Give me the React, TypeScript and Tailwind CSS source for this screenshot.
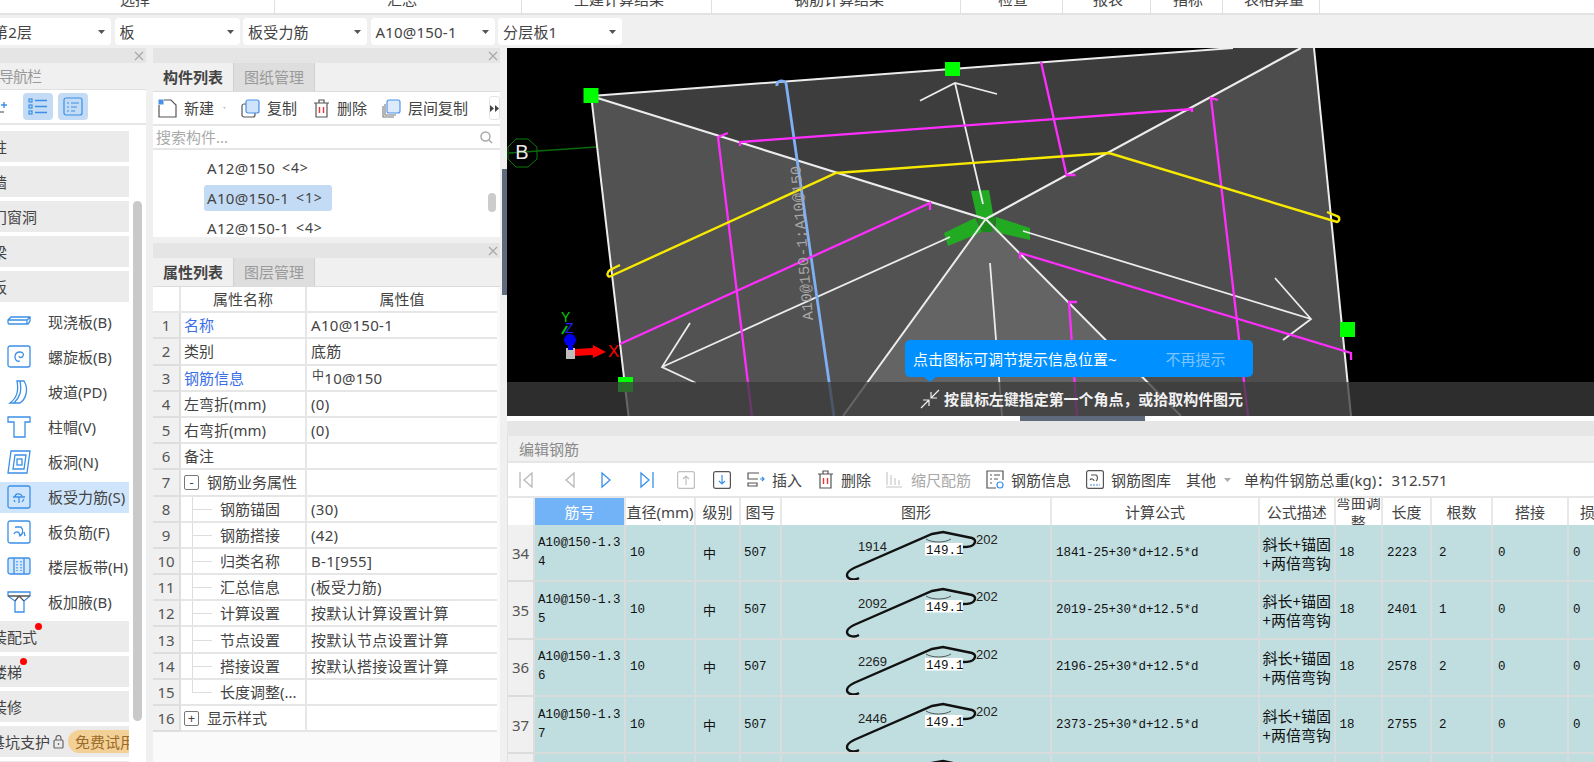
import React from "react";

const MONO = "font-['Liberation_Mono',monospace]";

const topTabs = [
  { label: "选择", cls: "w-[275px] pl-[120px]" },
  { label: "汇总", cls: "w-[247px] pl-[112px]" },
  { label: "土建计算结果", cls: "w-[190px] pl-[52px]" },
  { label: "钢筋计算结果", cls: "w-[249px] pl-[82px]" },
  { label: "检查", cls: "w-[102px] pl-[37px]" },
  { label: "报表", cls: "w-[88px] pl-[30px]" },
  { label: "指标", cls: "w-[72px] pl-[22px]" },
  { label: "表格算量", cls: "w-[97px] pl-[21px]" },
];

function Caret({ className = "" }: { className?: string }) {
  return (
    <svg width="7" height="4" viewBox="0 0 7 4" className={className}>
      <path d="M0 0h7L3.500 4z" fill="currentColor" />
    </svg>
  );
}

function Select({ text, cls, textCls = "" }: { text: string; cls: string; textCls?: string }) {
  return (
    <div className={`flex h-[27px] shrink-0 items-center justify-between rounded-[4px] bg-white pl-[5px] pr-[6px] ${cls}`}>
      <span className={`whitespace-nowrap tracking-[0.2px] ${textCls}`}>{text}</span>
      <Caret className="text-[#555]" />
    </div>
  );
}

function CloseStrip() {
  return (
    <div className="flex h-[15px] items-center justify-end bg-[#e5e5e5] pr-[2px]">
      <svg width="10" height="10" viewBox="0 0 10 10" stroke="#a8a8a8" strokeWidth="1.2">
        <path d="M1 1l8 8M9 1l-8 8" />
      </svg>
    </div>
  );
}

function Tabs({ active, other }: { active: string; other: string }) {
  return (
    <div className="flex h-[29px] border-b border-[#dcdcdc] bg-[#f0f0f0]">
      <div className="flex w-[81px] items-center justify-center border-r border-[#d0d0d0] font-bold text-[#444]">{active}</div>
      <div className="flex w-[81px] items-center justify-center border-r border-[#d0d0d0] bg-[#dedede] text-[#9a9a9a]">{other}</div>
    </div>
  );
}

const BL = "#3b8fe8";

function NavIcon({ kind }: { kind: string }) {
  const c = { fill: "none", stroke: BL, strokeWidth: 1.3 };
  return (
    <svg width="24" height="24" viewBox="0 0 24 24" {...c}>
      {kind === "slab" && <path d="M1 10l3-3h19v4l-2 3H2l-1-1zM1 10h19l3-3M20 10v4" />}
      {kind === "spiral" && (
        <>
          <rect x="1" y="1" width="22" height="21" rx="2" />
          <path d="M13 16c-3 1-5-1-5-4s2-5 5-5 4 2 3 4-4 2-4 0" />
        </>
      )}
      {kind === "ramp" && <path d="M3 23c7-5 9-12 7-22h7c5 8 2 18-4 22zM7 23c6-6 8-12 6-22" />}
      {kind === "cap" && <path d="M1 2h22v5H18v15H7V7H1zM1 7h6M18 7h5" />}
      {kind === "hole" && (
        <>
          <path d="M4 1h19l-3 22H1z" />
          <path d="M8 5h11l-2 14H6z" />
          <rect x="10" y="9" width="5" height="6" />
        </>
      )}
      {kind === "bar" && (
        <>
          <rect x="1" y="1" width="22" height="22" rx="2" />
          <path d="M6 12h12M8 12c0-4 6-4 7-1M12 12v6M17 14l-2 3M7 15l1 2" />
        </>
      )}
      {kind === "neg" && (
        <>
          <rect x="1" y="1" width="22" height="22" rx="2" />
          <path d="M8 7h6c3 3 2 8-2 9M7 14c1-3 5-3 6 1M17 12l1 4" />
        </>
      )}
      {kind === "band" && (
        <>
          <rect x="1" y="3" width="22" height="16" rx="2" fill="#d6e8fb" />
          <path d="M7 3v16M17 3v16" />
          <path d="M10 6v10M14 6v10" strokeDasharray="1.500 1.500" />
        </>
      )}
      {kind === "haunch" && (
        <>
          <path d="M1 2h22v4l-6 5v11H8V11L1 6z" />
          <path d="M1 6h22M8 11l4-5 5 5" stroke="#555" />
        </>
      )}
    </svg>
  );
}

const subItems = [
  { icon: "slab", label: "现浇板(B)" },
  { icon: "spiral", label: "螺旋板(B)" },
  { icon: "ramp", label: "坡道(PD)" },
  { icon: "cap", label: "柱帽(V)" },
  { icon: "hole", label: "板洞(N)" },
  { icon: "bar", label: "板受力筋(S)", selected: true },
  { icon: "neg", label: "板负筋(F)" },
  { icon: "band", label: "楼层板带(H)" },
  { icon: "haunch", label: "板加腋(B)" },
];

function NavGroup({ label, dot }: { label: string; dot?: string }) {
  return (
    <div className="relative flex h-[31px] shrink-0 items-center overflow-hidden bg-[#ebebeb]">
      <span className="ml-[-8px] whitespace-nowrap text-[#444]">{label}</span>
      {dot && <span className={`absolute top-[2px] h-[7px] w-[7px] rounded-full bg-[#f00] ${dot}`} />}
    </div>
  );
}

function Nav() {
  return (
    <div className="flex h-full w-[146px] shrink-0 flex-col bg-white">
      <CloseStrip />
      <div className="flex h-[27px] items-center border-b border-[#e0e0e0] bg-[#f0f0f0] text-[#999]">
        <span className="ml-[-1px] tracking-[-1px]">导航栏</span>
      </div>
      <div className="flex h-[35px] items-center border-b-2 border-[#e6e6e6]">
        <svg width="9" height="12" viewBox="0 0 9 12" stroke={BL} strokeWidth="1.400">
          <path d="M4 1v6M1 4h6" />
          <path d="M0 11h4" stroke="#777" />
        </svg>
        <div className="ml-[14px] flex h-[27px] w-[30px] items-center justify-center rounded-[4px] bg-[#c3dbf5]">
          <svg width="20" height="17" viewBox="0 0 20 17" fill="none" stroke={BL} strokeWidth="1.200">
            <rect x="1" y="1" width="3" height="3" />
            <rect x="1" y="7" width="3" height="3" />
            <rect x="1" y="13" width="3" height="3" />
            <path d="M7 2.500h12M7 8.500h12M7 14.500h12" strokeWidth="1.500" />
          </svg>
        </div>
        <div className="ml-[5px] flex h-[27px] w-[30px] items-center justify-center rounded-[4px] bg-[#c3dbf5]">
          <svg width="20" height="19" viewBox="0 0 20 19" fill="none" stroke={BL} strokeWidth="1.200">
            <rect x="1" y="1" width="18" height="17" rx="2" />
            <path d="M4 6h2M8 6h8M4 10h2M8 10h6M4 14h2M8 14h4" />
          </svg>
        </div>
      </div>
      <div className="flex min-h-0 flex-1 gap-[4px] overflow-hidden">
        <div className="flex w-[129px] shrink-0 flex-col gap-[4px] pt-[6px]">
          <NavGroup label="柱" />
          <NavGroup label="墙" />
          <NavGroup label="门窗洞" />
          <NavGroup label="梁" />
          <NavGroup label="板" />
          <div className="mb-[-2.5px] mt-[-1.5px] flex shrink-0 flex-col">
            {subItems.map((s) => (
              <div key={s.label} className="flex h-[35px] items-center">
                <div className={`flex h-[31px] w-full items-center pl-[7px] ${s.selected ? "bg-[#cfe5fb]" : ""}`}>
                  <NavIcon kind={s.icon} />
                  <span className="ml-[17px] whitespace-nowrap text-[#444]">{s.label}</span>
                </div>
              </div>
            ))}
          </div>
          <NavGroup label="装配式" dot="left-[35px]" />
          <NavGroup label="楼梯" dot="left-[20px]" />
          <NavGroup label="装修" />
          <div className="flex h-[31px] shrink-0 items-center overflow-hidden bg-[#ebebeb]">
            <span className="ml-[-10px] whitespace-nowrap text-[#444]">基坑支护</span>
            <svg width="11" height="14" viewBox="0 0 11 14" fill="none" stroke="#666" strokeWidth="1.200" className="ml-[3px] shrink-0">
              <rect x="1" y="5" width="9" height="8" rx="1" />
              <path d="M3 5V3a2.500 2.500 0 0 1 5 0v2M5.500 8v2" />
            </svg>
            <span className="ml-[4px] flex h-[23px] shrink-0 items-center whitespace-nowrap rounded-l-full bg-[#f3d196] pl-[7px] pr-[10px] text-[#9a6a2a]">免费试用</span>
          </div>
          <NavGroup label="" />
        </div>
        <div className="mt-[76px] h-[520px] w-[9px] shrink-0 rounded-full bg-[#c9c9c9]" />
      </div>
    </div>
  );
}

function ToolBtn({ icon, label, cls }: { icon: React.ReactNode; label: string; cls: string }) {
  return (
    <div className={`flex shrink-0 items-center ${cls}`}>
      {icon}
      <span className="whitespace-nowrap text-[#444]">{label}</span>
    </div>
  );
}

function ListRow({ name, count, cls }: { name: string; count: number; cls: string }) {
  return (
    <div className={`flex h-[26px] items-center pl-[3px] tracking-[0.3px] ${cls}`}>
      {name}
      <span className="ml-[7px] text-[14px] tracking-[0.8px]">&lt;{count}&gt;</span>
    </div>
  );
}

function ComponentPanel() {
  return (
    <div className="flex h-[189px] shrink-0 flex-col bg-white">
      <CloseStrip />
      <Tabs active="构件列表" other="图纸管理" />
      <div className="flex h-[34px] items-center border-b-2 border-[#e6e6e6] pl-[5px]">
        <ToolBtn
          cls="gap-[7px]"
          label="新建"
          icon={
            <svg width="19" height="19" viewBox="0 0 19 19" fill="none" stroke="#555" strokeWidth="1.200">
              <path d="M1 6v12h17V6l-5-5H6" />
              <rect x="0.500" y="0.500" width="5" height="5" fill="#4a8fe8" stroke="none" />
            </svg>
          }
        />
        <Caret className="ml-[9px] text-[#aaa]" />
        <ToolBtn
          cls="ml-[15px] gap-[7px]"
          label="复制"
          icon={
            <svg width="19" height="19" viewBox="0 0 19 19" fill="none" stroke="#555" strokeWidth="1.200">
              <rect x="1" y="5" width="13" height="13" rx="2" />
              <rect x="5" y="1" width="13" height="13" rx="2" fill="#cfe3fa" stroke="#4a8fe8" />
            </svg>
          }
        />
        <ToolBtn
          cls="ml-[16px] gap-[7px]"
          label="删除"
          icon={
            <svg width="17" height="19" viewBox="0 0 17 19" fill="none" stroke="#555" strokeWidth="1.200">
              <path d="M1 4h15M6 4V1h5v3M3 4v14h11V4" />
              <path d="M6.500 8v6M10.500 8v6" stroke="#e33" strokeWidth="1.400" />
            </svg>
          }
        />
        <ToolBtn
          cls="ml-[15px] gap-[7px]"
          label="层间复制"
          icon={
            <svg width="19" height="19" viewBox="0 0 19 19" fill="none" stroke="#777" strokeWidth="1.100">
              <path d="M1 7v11h11M3 5v11h11" />
              <rect x="5" y="1" width="13" height="13" rx="2" fill="#dceafb" stroke="#4a8fe8" />
            </svg>
          }
        />
        <div className="ml-[21px] flex h-[24px] w-[13px] items-center justify-center rounded-[3px] border border-[#e4e4e4] text-[#444]">
          <svg width="9" height="7" viewBox="0 0 9 7" fill="currentColor">
            <path d="M0 0l4 3.500L0 7zM5 0l4 3.500L5 7z" />
          </svg>
        </div>
      </div>
      <div className="flex h-[24px] items-center justify-between border-b-2 border-[#e6e6e6] pl-[3px] pr-[7px] text-[#aaa]">
        <span>搜索构件...</span>
        <svg width="13" height="13" viewBox="0 0 13 13" fill="none" stroke="#aaa" strokeWidth="1.500">
          <circle cx="5.500" cy="5.500" r="4.500" />
          <path d="M9 9l3 3" />
        </svg>
      </div>
      <div className="relative min-h-0 flex-1 overflow-hidden">
        <div className="flex flex-col gap-[4px] pl-[51px] pt-[5px] text-[#444]">
          <ListRow name="A12@150" count={4} cls="" />
          <ListRow name="A10@150-1" count={1} cls="w-[128px] rounded-[3px] bg-[#c3dbf5]" />
          <ListRow name="A12@150-1" count={4} cls="" />
        </div>
        <div className="absolute right-[4px] top-[43px] h-[19px] w-[8px] rounded-full bg-[#ccc]" />
      </div>
    </div>
  );
}

const propRows: { name: string; value?: string; blue?: boolean; tree?: boolean; toggle?: string; last?: boolean }[] = [
  { name: "名称", value: "A10@150-1", blue: true },
  { name: "类别", value: "底筋" },
  { name: "钢筋信息", value: "10@150", blue: true },
  { name: "左弯折(mm)", value: "(0)" },
  { name: "右弯折(mm)", value: "(0)" },
  { name: "备注" },
  { name: "钢筋业务属性", toggle: "-" },
  { name: "钢筋锚固", value: "(30)", tree: true },
  { name: "钢筋搭接", value: "(42)", tree: true },
  { name: "归类名称", value: "B-1[955]", tree: true },
  { name: "汇总信息", value: "(板受力筋)", tree: true },
  { name: "计算设置", value: "按默认计算设置计算", tree: true },
  { name: "节点设置", value: "按默认节点设置计算", tree: true },
  { name: "搭接设置", value: "按默认搭接设置计算", tree: true },
  { name: "长度调整(...", tree: true, last: true },
  { name: "显示样式", toggle: "+" },
];

function PropsPanel() {
  return (
    <div className="flex min-h-0 flex-1 flex-col bg-[#fafafa]">
      <CloseStrip />
      <Tabs active="属性列表" other="图层管理" />
      <div className="grid grid-cols-[28px_126px_190px_3px] auto-rows-[26.2px] text-[#444]">
        <div className="border-b-2 border-r-2 border-[#e6e6e6] bg-white" />
        <div className="flex items-center justify-center border-b-2 border-r-2 border-[#e6e6e6] bg-white">属性名称</div>
        <div className="flex items-center justify-center border-b-2 border-[#e6e6e6] bg-white">属性值</div>
        <div />
        {propRows.map((r, i) => (
          <React.Fragment key={r.name}>
            <div className="flex items-center justify-center border-b-2 border-r-2 border-[#dedede] bg-[#f0f0f0] text-[#555]">{i + 1}</div>
            <div className="relative flex items-center overflow-hidden whitespace-nowrap border-b-2 border-r-2 border-[#e6e6e6] bg-white">
              {r.toggle && (
                <>
                  <span className="ml-[3px] flex h-[15px] w-[15px] items-center justify-center rounded-[2px] border border-[#777] text-[13px] leading-none">{r.toggle}</span>
                  <span className="ml-[8px]">{r.name}</span>
                </>
              )}
              {r.tree && (
                <>
                  <span className={`absolute left-[11px] top-0 w-px bg-[#ddd] ${r.last ? "h-1/2" : "h-full"}`} />
                  <span className="absolute left-[11px] top-1/2 h-px w-[20px] bg-[#ddd]" />
                  <span className="ml-[39px]">{r.name}</span>
                </>
              )}
              {!r.toggle && !r.tree && <span className={`ml-[3px] ${r.blue ? "text-[#3b6fe8]" : ""}`}>{r.name}</span>}
            </div>
            <div className="flex items-center whitespace-nowrap border-b-2 border-[#e6e6e6] bg-white pl-[4px] tracking-[0.3px]">
              {r.name === "钢筋信息" && <span className="mb-[4px] ml-[1px] text-[12px]">中</span>}
              {r.value}
            </div>
            <div />
          </React.Fragment>
        ))}
      </div>
    </div>
  );
}

function Canvas() {
  const W = "#ececec";
  const M = "#ff2eff";
  const Y = "#f7ea00";
  return (
    <div className="relative h-[368px] w-[1087px] shrink-0 overflow-hidden bg-black">
      <svg width="1087" height="368" viewBox="507 48 1087 368" fill="none" className="block">
        <polygon points="591,96 1233,48 1301,48 985.700,219" fill="#3d3d3d" />
        <polygon points="591,96 985.700,219 843,416 628.500,416" fill="#525252" />
        <polygon points="985.700,219 1301,48 1314,48 1351,416 1181,416" fill="#4d4d4d" />
        <polygon points="985.700,219 843,416 1181,416" fill="#646464" />

        <path d="M509 153L596 147" stroke="#0a6a0a" strokeWidth="1.300" />
        <polygon points="516,139 528,139 537,147 537,159 528,167 516,167 508,159 508,147" stroke="#0a7a0a" strokeWidth="1" />
        <text x="522" y="159" fontSize="20" fill="#e8e8e8" textAnchor="middle" fontFamily="Liberation Sans, sans-serif">B</text>

        <polygon points="971,191 989,190 993.600,217 977,218" fill="#22aa22" />
        <polygon points="944,233 975,218 982,232 948,246" fill="#22aa22" />
        <polygon points="996,217 1030,228 1030,240 995,232" fill="#22aa22" />
        <polygon points="977,218 996,217 992,232 982,232" fill="#1a8a1a" />

        <g stroke={W} strokeWidth="2">
          <path d="M591 96L1233 48" />
          <path d="M592 103L628.500 416" />
          <path d="M1314 48L1351 416" />
          <path d="M591 96L985.700 219L1301 48" strokeWidth="2.200" />
          <path d="M985.700 219L843 416M985.700 219L1181 416" />
          <path d="M920 100.700L955 83L997 94M955 83L983 204" strokeWidth="1.800" />
          <path d="M690 323L662 367L696 383M662 367L950 237" strokeWidth="1.800" />
          <path d="M1275 278L1311 319L1283 340M1311 319L1023 231" strokeWidth="1.800" />
          <path d="M990 263L1002 416" strokeWidth="1.800" />
        </g>

        <path d="M777 86c-1-5 6-7 9-3L834 416" stroke="#7fb0f5" strokeWidth="2.800" />

        <g stroke={M} strokeWidth="2.300">
          <path d="M740 146v-4L1192 109v3" />
          <path d="M728 133l-10 4L752 416" />
          <path d="M620 344L930 203v7" />
          <path d="M1041 62L1066.500 175h9" />
          <path d="M1020 259v-6L1351 353v7" />
          <path d="M1218 100l-7-2L1248 416" />
          <path d="M1077 302h-8L1077 416" />
        </g>

        <path d="M620 265l-10 5c-4 3-3 8 1 6L836 173L1109 153L1337 222c3-1 3-5 0-6l-10-4" stroke={Y} strokeWidth="2.400" />

        <rect x="583.500" y="88" width="15" height="15" fill="#00ff00" />
        <rect x="945" y="62" width="15" height="14" fill="#00ff00" />
        <rect x="1340" y="322" width="15" height="15" fill="#00ff00" />
        <rect x="618" y="377" width="15" height="15" fill="#00ff00" />

        <text transform="translate(813 320) rotate(-94.7)" fontSize="15" fill="#a8a8a8" fontFamily="Liberation Mono, monospace" textLength="155">A10@150-1;A10@150</text>

        <rect x="566" y="348" width="9" height="11" fill="#bdbdbd" />
        <path d="M562 334l5-8" stroke="#00c000" strokeWidth="2" />
        <circle cx="570" cy="340" r="6" fill="#0000ee" />
        <rect x="568" y="340" width="5" height="10" fill="#0000ee" />
        <path d="M575 349l18-1v-3l13 7-13 6v-3l-18 1z" fill="#ff0000" />
        <text x="561" y="322" fontSize="14" fill="#00d000" fontFamily="Liberation Sans, sans-serif">Y</text>
        <text x="565" y="333" fontSize="14" fill="#2020ff" fontFamily="Liberation Sans, sans-serif">Z</text>
        <text x="608" y="357" fontSize="17" fill="#ff0000" fontFamily="Liberation Sans, sans-serif">X</text>
      </svg>

      <div className="absolute bottom-0 left-0 right-0 flex h-[34px] items-center bg-[rgba(59,59,59,0.76)] pl-[413px]">
        <svg width="20" height="20" viewBox="0 0 20 20" fill="none" stroke="#eee" strokeWidth="1.200">
          <path d="M19 1l-8 8M11 3v6h6M1 19l8-8M3 11h6v6" />
        </svg>
        <span className="ml-[4px] whitespace-nowrap font-bold tracking-[-0.05px] text-[#f2f2f2]">按鼠标左键指定第一个角点，或拾取构件图元</span>
      </div>
      <div className="absolute left-[398px] top-[292px] flex h-[37px] w-[348px] items-center rounded-[5px] bg-[#0090ff] pl-[8px] text-white">
        <span className="whitespace-nowrap">点击图标可调节提示信息位置~</span>
        <span className="ml-[49px] whitespace-nowrap text-[#7cc4ff]">不再提示</span>
        <span className="absolute left-[19px] top-[37px] h-0 w-0 border-x-[6px] border-t-[5px] border-x-transparent border-t-[#0090ff]" />
      </div>
    </div>
  );
}

function RebarShape({ len }: { len: string }) {
  return (
    <svg width="268" height="57" viewBox="0 0 268 57" fill="none" className="block">
      <path d="M77 53c-5 3-12 1-12-3 0-3 3-5 7-7L150 9l11-2 29 6c3 1 4 3 2 6-1 2-3 3-11 3" stroke="#111" strokeWidth="2.400" />
      <path d="M144 14c6 4 19 4 25 0" stroke="#333" strokeWidth="0.800" />
      <rect x="143" y="18" width="37.500" height="12.500" fill="#fff" />
      <text x="144" y="28.500" fontSize="12.500" fill="#111" fontFamily="Liberation Mono, monospace">149.1</text>
      <text x="76" y="25.500" fontSize="13" fill="#222" fontFamily="Liberation Sans, sans-serif">{len}</text>
      <text x="194" y="18.500" fontSize="13" fill="#222" fontFamily="Liberation Sans, sans-serif">202</text>
    </svg>
  );
}

const rebarRows = [
  { no: 34, tail: "4", len: "1914", formula: "1841-25+30*d+12.5*d", total: "2223", count: "2" },
  { no: 35, tail: "5", len: "2092", formula: "2019-25+30*d+12.5*d", total: "2401", count: "1" },
  { no: 36, tail: "6", len: "2269", formula: "2196-25+30*d+12.5*d", total: "2578", count: "2" },
  { no: 37, tail: "7", len: "2446", formula: "2373-25+30*d+12.5*d", total: "2755", count: "2" },
  { no: 38, tail: "8", len: "2624", formula: "2551-25+30*d+12.5*d", total: "2933", count: "2" },
];

const COLS = "grid grid-cols-[27px_91px_70px_45px_41px_270px_208px_75.5px_47.5px_49px_61px_76px_30px]";
const headCell = "flex items-center justify-center overflow-hidden border-r-2 border-[#e8e8e8] bg-white text-[#444]";
const cell = `flex items-center border-b-2 border-r-2 border-[#d8dcdc] bg-[#c0dee0] text-[12.5px] text-[#111] ${MONO}`;

function RebarTable() {
  return (
    <div className="min-h-0 flex-1 overflow-hidden">
      <div className={`${COLS} h-[27px]`}>
        <div className={headCell} />
        <div className="flex items-center justify-center border-r-2 border-[#e8e8e8] bg-[#72b3f7] text-white">筋号</div>
        <div className={`${headCell} whitespace-nowrap`}>直径(mm)</div>
        <div className={headCell}>级别</div>
        <div className={headCell}>图号</div>
        <div className={headCell}>图形</div>
        <div className={headCell}>计算公式</div>
        <div className={headCell}>公式描述</div>
        <div className={`${headCell} text-center leading-[20px]`}>弯曲调整</div>
        <div className={headCell}>长度</div>
        <div className={headCell}>根数</div>
        <div className={headCell}>搭接</div>
        <div className={`${headCell} justify-start whitespace-nowrap pl-[11px]`}>损耗</div>
      </div>
      {rebarRows.map((r) => (
        <div key={r.no} className={`${COLS} h-[57.33px]`}>
          <div className="flex items-center justify-center border-b-2 border-r-2 border-[#dcdcdc] bg-[#f0f0f0] text-[#555]">{r.no}</div>
          <div className={`${cell} break-all pl-[3px] leading-[19px]`}>
            <span>A10@150-1.3{r.tail}</span>
          </div>
          <div className={`${cell} pl-[4px]`}>10</div>
          <div className={`${cell} pl-[7px] font-['Noto_Sans_CJK_SC',sans-serif] text-[13px]`}>中</div>
          <div className={`${cell} pl-[3px]`}>507</div>
          <div className={`${cell} items-start overflow-hidden`}>
            <RebarShape len={r.len} />
          </div>
          <div className={`${cell} whitespace-nowrap pl-[4px]`}>{r.formula}</div>
          <div className={`${cell} justify-center text-center font-['Noto_Sans_CJK_SC',sans-serif] text-[15px] leading-[19px]`}>
            斜长+锚固
            <br />
            +两倍弯钩
          </div>
          <div className={`${cell} pl-[4px]`}>18</div>
          <div className={`${cell} pl-[4px]`}>{r.total}</div>
          <div className={`${cell} pl-[7px]`}>{r.count}</div>
          <div className={`${cell} pl-[5px]`}>0</div>
          <div className={`${cell} pl-[4px]`}>0</div>
        </div>
      ))}
    </div>
  );
}

function NavArrow({ dir, color, bar }: { dir: "l" | "r"; color: string; bar?: boolean }) {
  return (
    <svg width="14" height="18" viewBox="0 0 14 18" fill="none" stroke={color} strokeWidth="1.300">
      {dir === "l" ? (
        <>
          {bar && <path d="M1 1v16" />}
          <path d="M13 2L5 9l8 7z" />
        </>
      ) : (
        <>
          <path d="M1 2l8 7-8 7z" />
          {bar && <path d="M13 1v16" />}
        </>
      )}
    </svg>
  );
}

function RebarToolbar() {
  return (
    <div className="flex h-[35px] shrink-0 items-center border-b-2 border-[#e6e6e6] bg-white pl-[11px] text-[#444]">
      <NavArrow dir="l" color="#b8b8b8" bar />
      <div className="ml-[28px]"><NavArrow dir="l" color="#b8b8b8" /></div>
      <div className="ml-[26px]"><NavArrow dir="r" color="#3b8fe8" /></div>
      <div className="ml-[25px]"><NavArrow dir="r" color="#3b8fe8" bar /></div>
      <svg width="18" height="18" viewBox="0 0 18 18" fill="none" stroke="#c0c0c0" strokeWidth="1.200" className="ml-[23px]">
        <rect x="0.600" y="0.600" width="16.800" height="16.800" rx="2" />
        <path d="M9 14V5M6 8l3-3 3 3" />
      </svg>
      <svg width="18" height="18" viewBox="0 0 18 18" fill="none" stroke="#555" strokeWidth="1.200" className="ml-[18px]">
        <rect x="0.600" y="0.600" width="16.800" height="16.800" rx="2" />
        <path d="M9 4v9M6 10l3 3 3-3" stroke="#3b8fe8" />
      </svg>
      <ToolBtn
        cls="ml-[16px] gap-[7px]"
        label="插入"
        icon={
          <svg width="18" height="15" viewBox="0 0 18 15" fill="none" stroke="#555" strokeWidth="1.200">
            <path d="M12 1H1v6h10M1 11h9v3H1z" />
            <path d="M13 7h4M15 5l2 2-2 2" stroke="#3b8fe8" />
          </svg>
        }
      />
      <ToolBtn
        cls="ml-[15px] gap-[7px]"
        label="删除"
        icon={
          <svg width="17" height="19" viewBox="0 0 17 19" fill="none" stroke="#555" strokeWidth="1.200">
            <path d="M1 4h15M6 4V1h5v3M3 4v14h11V4" />
            <path d="M6.500 8v6M10.500 8v6" stroke="#e33" strokeWidth="1.400" />
          </svg>
        }
      />
      <div className="ml-[15px] flex items-center gap-[9px]">
        <svg width="16" height="18" viewBox="0 0 16 18" fill="none" stroke="#c4c4c4" strokeWidth="1.100">
          <path d="M1 1v13M5 4v10M9 7v7M13 9v5M0 16h16" />
        </svg>
        <span className="whitespace-nowrap text-[#a8a8a8]">缩尺配筋</span>
      </div>
      <ToolBtn
        cls="ml-[15px] gap-[7px]"
        label="钢筋信息"
        icon={
          <svg width="18" height="19" viewBox="0 0 18 19" fill="none" stroke="#555" strokeWidth="1.200">
            <path d="M17 10V1H1v17h9M4 5h2M8 5h6M4 9h2M8 9h4M4 13h2" />
            <circle cx="14" cy="15" r="3" stroke="#3b8fe8" />
          </svg>
        }
      />
      <ToolBtn
        cls="ml-[15px] gap-[7px]"
        label="钢筋图库"
        icon={
          <svg width="18" height="19" viewBox="0 0 18 19" fill="none" stroke="#555" strokeWidth="1.200">
            <rect x="0.600" y="0.600" width="16.800" height="17.800" rx="2" />
            <path d="M5 5h5c2 1 2 5 0 6M4 10c1-2 4-1 4 1" />
            <path d="M4 15h10" stroke="#3b8fe8" strokeDasharray="2 1" />
          </svg>
        }
      />
      <span className="ml-[15px] whitespace-nowrap">其他</span>
      <Caret className="ml-[8px] text-[#aaa]" />
      <span className="ml-[13px] whitespace-nowrap tracking-[0.1px]">单构件钢筋总重(kg)：312.571</span>
    </div>
  );
}

export default function App() {
  return (
    <div className="flex h-[762px] w-[1594px] flex-col overflow-hidden bg-[#f0f0f0] font-['Noto_Sans','Noto_Sans_CJK_SC',sans-serif] text-[15px] leading-[20px] text-[#444]">
      <div className="flex h-[15px] shrink-0 overflow-hidden border-b-2 border-[#e2e2e2] bg-white">
        {topTabs.map((t) => (
          <div key={t.label} className={`shrink-0 whitespace-nowrap border-r border-[#e0e0e0] ${t.cls}`}>
            <span className="relative top-[-11px] block text-[#444]">{t.label}</span>
          </div>
        ))}
      </div>

      <div className="flex h-[33px] shrink-0 items-center gap-[3.5px]">
        <Select text="第2层" cls="w-[111px] rounded-l-none pl-0" textCls="ml-[-12px]" />
        <Select text="板" cls="w-[125px]" />
        <Select text="板受力筋" cls="w-[124px]" />
        <Select text="A10@150-1" cls="w-[124px]" />
        <Select text="分层板1" cls="w-[124px]" />
      </div>

      <div className="flex min-h-0 flex-1">
        <Nav />
        <div className="flex w-[354px] shrink-0 flex-col gap-[6px] pl-[7px]">
          <ComponentPanel />
          <PropsPanel />
        </div>
        <div className="flex min-w-0 flex-1 flex-col">
          <div className="flex shrink-0 items-center">
            <div className="flex h-[368px] w-[7px] shrink-0 items-center">
              <div className="ml-[2px] h-[126px] w-[5px] bg-[#5f6b7c]" />
            </div>
            <Canvas />
          </div>
          <div className="ml-[7px] flex h-[5px] shrink-0 bg-white">
            <div className="ml-[513px] h-[5px] w-[125px] bg-[#5f6b7c]" />
          </div>
          <div className="ml-[7px] h-[15px] shrink-0 bg-[#e6e6e6]" />
          <div className="ml-[7px] flex min-h-0 flex-1 flex-col border-l border-[#e0e0e0] bg-white">
            <div className="flex h-[27px] shrink-0 items-center border-b-2 border-[#e6e6e6] bg-[#f0f0f0] pl-[11px] text-[#8a8a8a]">编辑钢筋</div>
            <RebarToolbar />
            <RebarTable />
          </div>
        </div>
      </div>
    </div>
  );
}
